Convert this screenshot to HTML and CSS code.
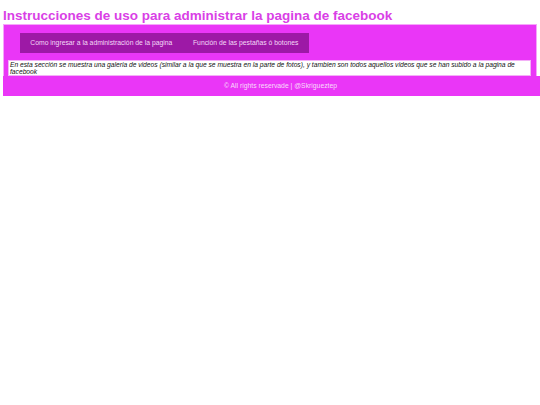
FILE: index.html
```html
<!DOCTYPE html>
<html lang="es">
<head>
<meta charset="utf-8">
<title>Instrucciones</title>
<link rel="stylesheet" href="styles.css">
</head>
<body>
<h1 class="title">Instrucciones de uso para administrar la pagina de facebook</h1>
<section class="panel">
  <ul class="tabs">
    <li class="tab">Como ingresar a la administración de la pagina</li>
    <li class="tab">Función de las pestañas ó botones</li>
  </ul>
  <article class="content">En esta sección se muestra una galeria de videos (similar a la que se muestra en la parte de fotos), y tambien son todos aquellos videos que se han subido a la pagina de facebook</article>
</section>
<footer class="footer">© All rights reservade | @Skrigueztep</footer>
</body>
</html>
```
FILE: styles.css
```css
html, body {
  margin: 0;
  padding: 0;
  background: #ffffff;
}
body {
  font-family: "Liberation Sans", Arial, sans-serif;
}
.title {
  margin: 8px 0 0 3px;
  font-size: 13.5px;
  line-height: 16px;
  font-weight: bold;
  color: #d93fe6;
}
.panel {
  margin: 0 3px 0 3px;
  background: #ea36f7;
  border: 1px solid #f5a6fa;
  border-bottom: none;
  padding: 8px 4px 0 4px;
}
.tabs {
  list-style: none;
  margin: 0 0 0 12px;
  padding: 0;
  display: flex;
  width: max-content;
  background: #9d19a6;
}
.tab {
  padding: 0 10.3px;
  height: 20px;
  line-height: 20px;
  font-size: 6.8px;
  color: #f4d8f6;
}
.content {
  display: block;
  margin: 7px 1px 0 0;
  background: #ffffff;
  border: 1px solid #f3b0f7;
  padding: 0 1px;
  font-size: 6.7px;
  line-height: 7px;
  font-style: italic;
  color: #111111;
}
.footer {
  margin: 0 0 0 3px;
  background: #ea36f7;
  height: 20px;
  line-height: 20px;
  font-size: 6.8px;
  color: #f9dcfb;
  text-align: center;
  padding-left: 18px;
}
```
